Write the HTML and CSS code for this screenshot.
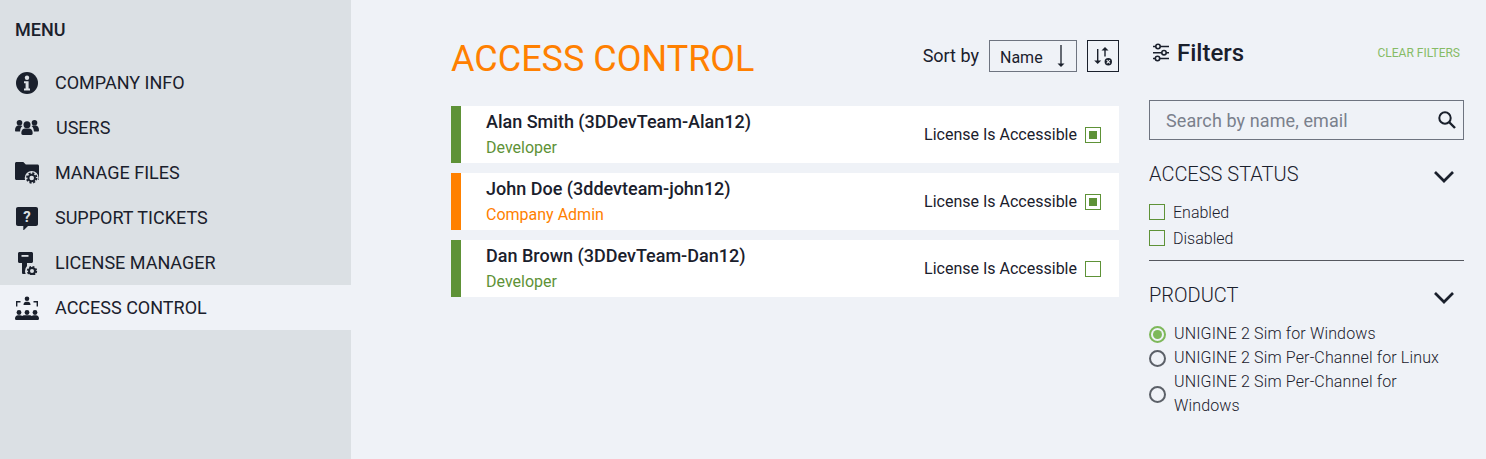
FILE: index.html
```html
<!DOCTYPE html>
<html lang="en">
<head>
<meta charset="utf-8">
<title>Access Control</title>
<link rel="stylesheet" href="styles.css">
</head>
<body>
<div class="app">
  <aside class="sidebar">
    <div class="menu-title">MENU</div>
    <nav class="menu">
      <a class="menu-item"><span class="menu-icon"><svg width="24" height="24" viewBox="0 0 24 24"><circle cx="12" cy="12" r="11" fill="#1a202c"/><circle cx="12" cy="6.800" r="2.200" fill="#dce0e4"/><path d="M9 10.200h4.600v7.300H15v2H9v-2h1.600v-5.300H9z" fill="#dce0e4"/></svg></span><span>COMPANY INFO</span></a>
      <a class="menu-item"><span class="menu-icon"><svg width="24" height="24" viewBox="0 0 24 24" fill="#1a202c"><circle cx="4.500" cy="6.800" r="2.800"/><circle cx="19.500" cy="6.800" r="2.800"/><circle cx="12" cy="8.800" r="3.500"/><path d="M0 14.200c0-3 1.500-4.700 3.500-4.700h2.300c.6 0 1.200.2 1.600.5-1.500 1.200-2.200 3-2.300 5.500H1c-.6 0-1-.6-1-1.300zM24 14.200c0-3-1.500-4.700-3.500-4.700h-2.300c-.6 0-1.200.2-1.600.5 1.500 1.200 2.200 3 2.300 5.500H23c.6 0 1-.6 1-1.300z"/><path d="M6.300 17c0-3 2-4.400 3.800-4.400h3.800c1.800 0 3.800 1.400 3.800 4.400 0 1.300-.6 2-1.500 2H7.800c-.9 0-1.500-.7-1.500-2z"/></svg></span><span class="users-label">USERS</span></a>
      <a class="menu-item"><span class="menu-icon"><svg width="24" height="24" viewBox="0 0 24 24" fill="#1a202c"><path d="M0 2.500C0 1.700.7 1 1.500 1h6.800l2.500 2.500h11.700c.8 0 1.500.7 1.500 1.500v14H1.500C.7 19 0 18.300 0 17.500z"/><circle cx="16.700" cy="17" r="7" fill="#dce0e4"/><circle cx="16.700" cy="17" r="3.300" fill="none" stroke="#1a202c" stroke-width="2"/><circle cx="16.700" cy="17" r="4.800" fill="none" stroke="#1a202c" stroke-width="1.800" stroke-dasharray="2.100 1.670"/></svg></span><span>MANAGE FILES</span></a>
      <a class="menu-item"><span class="menu-icon"><svg width="24" height="24" viewBox="0 0 24 24"><path d="M3 1h18c1.200 0 2 .8 2 2v15c0 1.200-.8 2-2 2h-8l-4.700 4.700V20H3c-1.200 0-2-.8-2-2V3c0-1.200.8-2 2-2z" fill="#1a202c"/><text x="12" y="15.500" text-anchor="middle" class="q-mark">?</text></svg></span><span>SUPPORT TICKETS</span></a>
      <a class="menu-item"><span class="menu-icon"><svg width="24" height="24" viewBox="0 0 24 24" fill="#1a202c"><path d="M4.500 1h12c.8 0 1.500.7 1.500 1.500v8c0 .8-.7 1.500-1.500 1.500H12v9.500c0 1-.6 1.500-1.300 1.500H8.300C7.600 23 7 22.500 7 21.500V12H4.500C3.700 12 3 11.300 3 10.500v-8C3 1.700 3.700 1 4.500 1z"/><rect x="6.500" y="4" width="7" height="1.800" fill="#dce0e4"/><circle cx="17" cy="20" r="7" fill="#dce0e4"/><circle cx="17" cy="20" r="3" fill="none" stroke="#1a202c" stroke-width="2"/><circle cx="17" cy="20" r="4.300" fill="none" stroke="#1a202c" stroke-width="1.700" stroke-dasharray="1.900 1.480"/></svg></span><span>LICENSE MANAGER</span></a>
      <a class="menu-item active"><span class="menu-icon"><svg width="24" height="24" viewBox="0 0 24 24" fill="#1a202c"><circle cx="12" cy="2.800" r="2.300"/><path d="M8.500 9c0-2 1.300-3.200 2.500-3.200h2c1.200 0 2.500 1.200 2.500 3.200z"/><path d="M1 10.500V5h4.500v1.400H2.400v4.100zM23 10.500V5h-4.500v1.400h3.100v4.100z"/><circle cx="4" cy="16.500" r="2.400"/><circle cx="12" cy="16.500" r="2.400"/><circle cx="20" cy="16.500" r="2.400"/><path d="M0 22.800c0-2 1.200-3.500 3-3.500h2c1 0 1.800.3 2.200.8.400-.5 1.300-.8 2.300-.8h5c1 0 1.900.3 2.300.8.400-.5 1.200-.8 2.200-.8h2c1.800 0 3 1.500 3 3.500 0 .6-.4 1.200-1 1.200H1c-.6 0-1-.6-1-1.200z"/></svg></span><span>ACCESS CONTROL</span></a>
    </nav>
  </aside>

  <main class="content">
    <header class="content-head">
      <h1 class="page-title">ACCESS CONTROL</h1>
      <div class="sort">
        <span class="sort-label">Sort by</span>
        <div class="sort-select"><span class="sort-value">Name</span><svg width="10" height="24" viewBox="0 0 10 24"><path d="M5 1v20" stroke="#1a202c" stroke-width="1.300"/><path d="M1.500 19.500h7L5 23z" fill="#1a202c"/></svg></div>
        <button class="sort-reset" type="button"><svg width="22" height="22" viewBox="0 0 22 22"><path d="M5.700 4v12" stroke="#1a202c" stroke-width="1.400"/><path d="M2.200 15.500h7L5.700 19z" fill="#1a202c"/><path d="M13 5v6.500" stroke="#1a202c" stroke-width="1.400"/><path d="M9.500 5.500h7L13 2z" fill="#1a202c"/><circle cx="16.300" cy="16.700" r="3.700" fill="#1a202c"/><path d="M14.700 15.100l3.200 3.200M17.900 15.100l-3.200 3.200" stroke="#eff2f7" stroke-width="1.100"/></svg></button>
      </div>
    </header>

    <ul class="user-list">
      <li class="user dev">
        <div class="user-info"><div class="user-name">Alan Smith (3DDevTeam-Alan12)</div><div class="user-role">Developer</div></div>
        <div class="license"><span>License Is Accessible</span><span class="check on"></span></div>
      </li>
      <li class="user admin">
        <div class="user-info"><div class="user-name">John Doe (3ddevteam-john12)</div><div class="user-role">Company Admin</div></div>
        <div class="license"><span>License Is Accessible</span><span class="check on"></span></div>
      </li>
      <li class="user dev">
        <div class="user-info"><div class="user-name">Dan Brown (3DDevTeam-Dan12)</div><div class="user-role">Developer</div></div>
        <div class="license"><span>License Is Accessible</span><span class="check"></span></div>
      </li>
    </ul>
  </main>

  <aside class="filters">
    <div class="filters-head">
      <div class="filters-title"><svg width="18" height="20" viewBox="0 0 18 20" fill="none" stroke="#1a202c" stroke-width="1.600"><path d="M1 3.500h16M1 9.700h16M1 15.500h16"/><circle cx="6" cy="3.500" r="2.200" fill="#eff2f7"/><circle cx="12" cy="9.700" r="2.200" fill="#eff2f7"/><circle cx="5.500" cy="15.500" r="2.200" fill="#eff2f7"/></svg><span>Filters</span></div>
      <a class="clear">CLEAR FILTERS</a>
    </div>
    <div class="search"><span>Search by name, email</span><svg width="18" height="18" viewBox="0 0 18 18" fill="none" stroke="#1a202c"><circle cx="7" cy="7" r="5.700" stroke-width="2"/><path d="M11 11l6 6" stroke-width="2.400"/></svg></div>

    <section class="group bordered">
      <div class="group-head"><span>ACCESS STATUS</span><svg class="chev" width="22" height="13" viewBox="0 0 22 13" fill="none" stroke="#1a202c" stroke-width="2.700"><path d="M2 2l9 9 9-9"/></svg></div>
      <label class="opt"><span class="check"></span><span>Enabled</span></label>
      <label class="opt"><span class="check"></span><span>Disabled</span></label>
    </section>

    <section class="group">
      <div class="group-head"><span>PRODUCT</span><svg class="chev" width="22" height="13" viewBox="0 0 22 13" fill="none" stroke="#1a202c" stroke-width="2.700"><path d="M2 2l9 9 9-9"/></svg></div>
      <div class="radio-list">
        <label class="radio-opt"><span class="radio on"></span><span>UNIGINE 2 Sim for Windows</span></label>
        <label class="radio-opt"><span class="radio"></span><span>UNIGINE 2 Sim Per-Channel for Linux</span></label>
        <label class="radio-opt"><span class="radio"></span><span>UNIGINE 2 Sim Per-Channel for Windows</span></label>
      </div>
    </section>
  </aside>
</div>
</body>
</html>
```
FILE: styles.css
```css
* { box-sizing: border-box; }
html, body { margin: 0; height: 100%; }
body { background: #eff2f7; color: #1a202c; font-family: Roboto, "Liberation Sans", sans-serif; font-size: 16px; overflow: hidden; }
.app { display: flex; height: 459px; }

.sidebar { width: 351px; flex: none; background: #dbe0e4; padding-top: 18px; }
.menu-title { font-size: 18px; font-weight: 500; line-height: 24px; padding-left: 15px; margin-bottom: 18px; }
.menu { display: flex; flex-direction: column; }
.menu-item { display: flex; align-items: center; height: 45px; padding-left: 15px; font-size: 18px; }
.menu-item.active { background: #eff2f7; }
.menu-icon { width: 40px; flex: none; display: flex; align-items: center; }
.users-label { margin-left: 1px; }
.q-mark { font: 700 15px Roboto, sans-serif; fill: #dce0e4; }

.content { width: 668px; flex: none; margin-left: 100px; padding-top: 32px; }
.content-head { display: flex; justify-content: space-between; align-items: center; height: 50px; margin-bottom: 24px; }
.page-title { margin: 0; padding-top: 4px; font-size: 36px; font-weight: 400; color: #ff8000; line-height: 50px; }
.sort { display: flex; align-items: center; margin-top: -3px; }
.sort-label { font-size: 18px; margin-right: 10px; }
.sort-select { width: 88px; height: 32px; border: 1px solid #6e7480; display: flex; align-items: center; justify-content: space-between; padding: 0 10px; font-size: 16px; margin-right: 10px; }
.sort-value { padding-top: 3px; }
.sort-reset { width: 32px; height: 32px; border: 1px solid #1a202c; background: none; padding: 0; display: flex; align-items: center; justify-content: center; }

.user-list { list-style: none; margin: 0; padding: 0; display: flex; flex-direction: column; gap: 10px; }
.user { height: 57px; background: #fff; border-left: 10px solid; display: flex; justify-content: space-between; align-items: center; padding: 0 18px 0 25px; }
.user.dev { border-color: #5e9237; }
.user.admin { border-color: #ff8000; }
.user-info { padding-top: 2px; }
.user-name { font-size: 18px; font-weight: 500; line-height: 24px; margin-top: -2px; }
.user-role { font-size: 16px; line-height: 24px; margin-top: 2px; }
.dev .user-role { color: #5e9237; }
.admin .user-role { color: #ff8000; }
.license { display: flex; align-items: center; gap: 8px; font-size: 16px; }

.check { width: 16px; height: 16px; flex: none; border: 1px solid #5e9237; display: inline-flex; align-items: center; justify-content: center; }
.check.on::before { content: ""; width: 8px; height: 8px; background: #5e9237; }

.filters { width: 315px; flex: none; margin-left: 30px; padding-top: 30px; }
.filters-head { display: flex; justify-content: space-between; align-items: center; height: 46px; margin-bottom: 24px; }
.filters-title { display: flex; align-items: center; gap: 7px; font-size: 24px; font-weight: 500; margin-left: 3px; }
.clear { font-size: 12px; color: #86bb66; margin-right: 4px; }
.search { height: 40px; border: 1px solid #6e7480; display: flex; align-items: center; justify-content: space-between; padding: 0 7px 0 16px; font-size: 18px; letter-spacing: .1px; color: #7a808c; }

.group-head { display: flex; justify-content: space-between; align-items: center; font-size: 20px; font-weight: 300; height: 28px; margin-bottom: 11px; padding-right: 9px; }
.chev { margin-top: 4px; }
.group { padding-top: 20px; }
.group.bordered { padding-bottom: 9px; border-bottom: 1px solid #55585f; }
.opt { display: flex; align-items: center; gap: 8px; height: 26px; font-size: 16px; font-weight: 300; }
.radio-list { padding-top: 2px; }
.radio-opt { display: flex; align-items: center; gap: 8px; font-size: 16px; font-weight: 300; line-height: 24px; letter-spacing: .15px; }
.radio { width: 17px; height: 17px; flex: none; border: 2px solid #5b6068; border-radius: 50%; display: inline-flex; align-items: center; justify-content: center; }
.radio.on { border-color: #7db85a; }
.radio.on::before { content: ""; width: 9px; height: 9px; border-radius: 50%; background: #7db85a; }
```
